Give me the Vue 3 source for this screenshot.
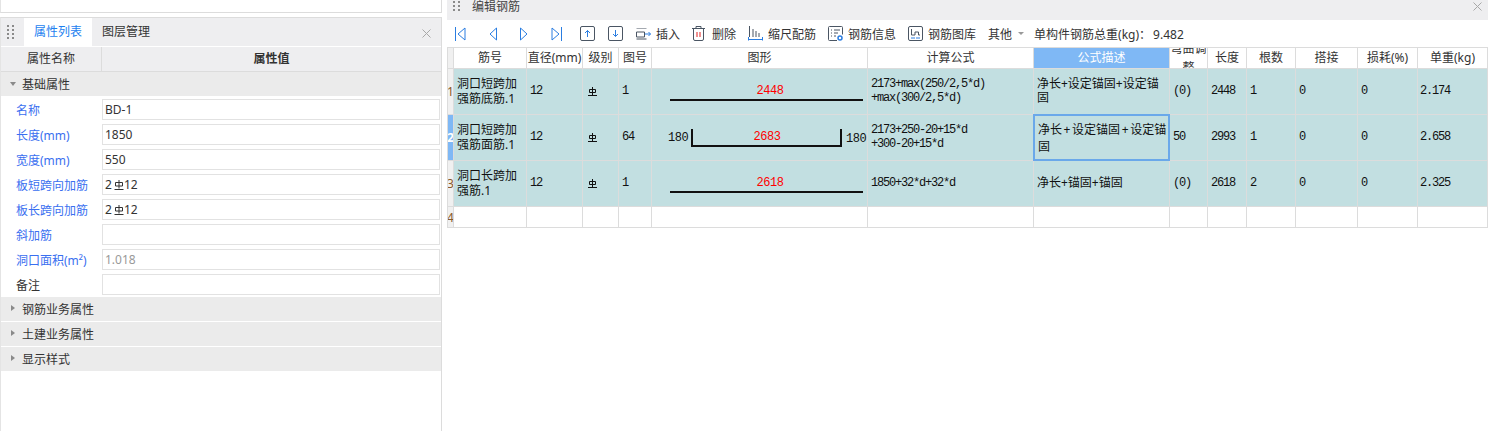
<template>
  <div class="page">
    <div class="left">
      <div class="top-strip"></div>
      <div class="panel">
        <div class="panel-head">
          <svg class="dots" width="7" height="15" viewBox="0 0 7 15"><g fill="#8a8a8a"><rect v-for="d in dots" :key="d.k" :x="d.x" :y="d.y" width="2" height="2" /></g></svg>
          <div class="tab active">属性列表</div>
          <div class="tab">图层管理</div>
          <svg class="close" width="9" height="9" viewBox="0 0 9 9"><path d="M0.5 0.5l8 8M8.5 0.5l-8 8" stroke="#a8a8a8" fill="none" /></svg>
        </div>
        <div class="prop-head">
          <div class="prop-name">属性名称</div>
          <div class="prop-val">属性值</div>
        </div>
        <div class="group">
          <span class="tri-down"></span>基础属性
        </div>
        <div v-for="p in props" :key="p.label" class="prop-row">
          <div class="label" :class="{ plain: p.plain }">{{ p.label }}</div>
          <div class="input" :class="{ muted: p.muted }">
            <template v-if="p.rebar">2<svg class="rebar" width="10" height="10" viewBox="0 0 10 10"><path d="M1.5 2.5h7v3.5h-7zM5 0v8.5M0.5 9.5h9" stroke="#333" fill="none" /></svg>12</template>
            <template v-else>{{ p.value }}</template>
          </div>
        </div>
        <div v-for="g in groups" :key="g" class="group closed">
          <span class="tri-right"></span>{{ g }}
        </div>
      </div>
    </div>

    <div class="right">
      <div class="title-bar">
        <svg class="dots2" width="7" height="12" viewBox="0 0 7 12"><g fill="#8a8a8a"><rect v-for="d in dots" :key="d.k" :x="d.x" :y="d.y - 3" width="2" height="2" /></g></svg>
        <span class="title">编辑钢筋</span>
        <svg class="close2" width="9" height="9" viewBox="0 0 9 9"><path d="M0.5 0.5l8 8M8.5 0.5l-8 8" stroke="#a8a8a8" fill="none" /></svg>
      </div>

      <div class="toolbar">
        <svg class="t-first" width="11" height="14" viewBox="0 0 11 14"><path d="M0.500 0v14M10 1L3 7l7 6z" stroke="#2a7de1" fill="none" /></svg>
        <svg class="t-prev" width="8" height="14" viewBox="0 0 8 14"><path d="M7.500 1L1 7l6.500 6z" stroke="#2a7de1" fill="none" /></svg>
        <svg class="t-next" width="8" height="14" viewBox="0 0 8 14"><path d="M0.500 1L7 7l-6.500 6z" stroke="#2a7de1" fill="none" /></svg>
        <svg class="t-last" width="11" height="14" viewBox="0 0 11 14"><path d="M10.500 0v14M1 1l7 6-7 6z" stroke="#2a7de1" fill="none" /></svg>
        <svg class="t-up" width="15" height="15" viewBox="0 0 15 15"><rect x="0.500" y="0.500" width="14" height="14" rx="1.500" stroke="#4a5563" fill="none" /><path d="M7.500 11V4.500M5 7l2.500-2.500L10 7" stroke="#2a7de1" fill="none" /></svg>
        <svg class="t-down" width="15" height="15" viewBox="0 0 15 15"><rect x="0.500" y="0.500" width="14" height="14" rx="1.500" stroke="#4a5563" fill="none" /><path d="M7.500 4v6.500M5 8l2.500 2.500L10 8" stroke="#2a7de1" fill="none" /></svg>
        <svg class="t-insert" width="15" height="12" viewBox="0 0 15 12"><path d="M0.500 0.500h10M0.500 4.500h8v5h-8zM0.500 11.500h10" stroke="#4a5563" fill="none" transform="translate(0 -0.500)" /><path d="M9 6h5.500M12.500 4l2 2-2 2" stroke="#2a7de1" fill="none" /></svg>
        <span class="t-text">插入</span>
        <svg class="t-trash" width="13" height="15" viewBox="0 0 13 15"><path d="M0 2.500h13M4 2.500V0.500h5v2M1.500 2.500v10.500a1.500 1.500 0 0 0 1.500 1.500h7a1.500 1.500 0 0 0 1.500-1.500V2.500" stroke="#4a5563" fill="none" /><path d="M5 6v5M8 6v5" stroke="#e02020" fill="none" /></svg>
        <span class="t-text wide">删除</span>
        <svg class="t-scale" width="15" height="15" viewBox="0 0 15 15"><path d="M1.500 0v11M5 3v8M8 5v6M11 7v4" stroke="#4a5563" fill="none" /><path d="M0.500 11v3.500M14.500 11v3.500M0 13.500h15" stroke="#2a7de1" fill="none" /></svg>
        <span class="t-text">缩尺配筋</span>
        <svg class="t-info" width="15" height="15" viewBox="0 0 15 15"><path d="M9 14.500H1.500a1 1 0 0 1-1-1v-12a1 1 0 0 1 1-1h12a1 1 0 0 1 1 1v7" stroke="#4a5563" fill="none" /><path d="M3 4h1M6 4h6M3 7h1M6 7h4M3 10h1M6 10h2" stroke="#4a5563" fill="none" /><circle cx="12" cy="12" r="2" stroke="#2a7de1" stroke-width="1.500" fill="none" /></svg>
        <span class="t-text">钢筋信息</span>
        <svg class="t-lib" width="15" height="15" viewBox="0 0 15 15"><rect x="0.500" y="0.500" width="14" height="14" rx="1.500" stroke="#4a5563" fill="none" /><path d="M3.500 3v6h3.500V6h3.500v3h1.500" stroke="#4a5563" fill="none" /><path d="M3 12h4M8 12h4" stroke="#2a7de1" fill="none" /></svg>
        <span class="t-text">钢筋图库</span>
        <span class="t-other">其他</span>
        <span class="caret"></span>
        <span class="t-total">单构件钢筋总重(kg)：<span class="t-value">9.482</span></span>
      </div>

      <div class="grid">
        <div class="h corner"></div>
        <div v-for="c in columns" :key="c" class="h" :class="{ sel: c === '公式描述', wrap: c === '弯曲调整' }">{{ c }}</div>

        <template v-for="(r, i) in rows" :key="r.no">
          <div class="rowno" :class="{ current: i === 1 }">{{ r.no }}</div>
          <div class="c name">{{ r.name }}</div>
          <div class="c num">{{ r.dia }}</div>
          <div class="c symbol">
            <svg width="9" height="9" viewBox="0 0 9 9"><path d="M1.500 2.500h6v3h-6zM4.500 0v8M0 8.500h9" stroke="#111" fill="none" /></svg>
          </div>
          <div class="c num">{{ r.fig }}</div>
          <div class="c shape">
            <svg v-if="r.bent" width="215" height="45" viewBox="0 0 215 45">
              <text x="16" y="26" class="dim">180</text>
              <path d="M40 14v17h149V14" stroke="#111" stroke-width="2" fill="none" />
              <text x="115" y="25" class="len">{{ r.len }}</text>
              <text x="194" y="27" class="dim">180</text>
            </svg>
            <svg v-else width="215" height="45" viewBox="0 0 215 45">
              <text x="118" y="25" class="len">{{ r.len }}</text>
              <path d="M18 31h193" stroke="#111" stroke-width="2" fill="none" />
            </svg>
          </div>
          <div class="c formula">{{ r.formula }}</div>
          <div class="c desc" :class="{ editing: i === 1 }">{{ r.desc }}</div>
          <div class="c num bend">{{ r.bend }}</div>
          <div class="c num">{{ r.total }}</div>
          <div class="c num">{{ r.count }}</div>
          <div class="c num">0</div>
          <div class="c num">0</div>
          <div class="c num weight">{{ r.weight }}</div>
        </template>

        <div class="rowno empty-no">4</div>
        <div v-for="c in columns" :key="'e' + c" class="blank"></div>
      </div>
    </div>
  </div>
</template>

<script setup>
const dots = []
for (let i = 0; i < 4; i++) {
  dots.push({ k: 'a' + i, x: 0, y: 3 + i * 4 - 3 })
  dots.push({ k: 'b' + i, x: 5, y: 3 + i * 4 - 3 })
}

const props = [
  { label: '名称', value: 'BD-1' },
  { label: '长度(mm)', value: '1850' },
  { label: '宽度(mm)', value: '550' },
  { label: '板短跨向加筋', rebar: true },
  { label: '板长跨向加筋', rebar: true },
  { label: '斜加筋', value: '' },
  { label: '洞口面积(m²)', value: '1.018', muted: true },
  { label: '备注', value: '', plain: true }
]

const groups = ['钢筋业务属性', '土建业务属性', '显示样式']

const columns = ['筋号', '直径(mm)', '级别', '图号', '图形', '计算公式', '公式描述', '弯曲调整', '长度', '根数', '搭接', '损耗(%)', '单重(kg)']

const rows = [
  {
    no: 1,
    name: '洞口短跨加\n强筋底筋.1',
    dia: 12,
    fig: 1,
    len: 2448,
    formula: '2173+max(250/2,5*d)\n+max(300/2,5*d)',
    desc: '净长+设定锚固+设定锚\n固',
    bend: '(0)',
    total: 2448,
    count: 1,
    weight: '2.174'
  },
  {
    no: 2,
    name: '洞口短跨加\n强筋面筋.1',
    dia: 12,
    fig: 64,
    len: 2683,
    bent: true,
    formula: '2173+250-20+15*d\n+300-20+15*d',
    desc: '净长 + 设定锚固 + 设定锚\n固',
    bend: '50',
    total: 2993,
    count: 1,
    weight: '2.658'
  },
  {
    no: 3,
    name: '洞口长跨加\n强筋.1',
    dia: 12,
    fig: 1,
    len: 2618,
    formula: '1850+32*d+32*d',
    desc: '净长+锚固+锚固',
    bend: '(0)',
    total: 2618,
    count: 2,
    weight: '2.325'
  }
]
</script>

<style>
html,
body {
  margin: 0;
  background: #fff;
}
</style>

<style scoped>
.page {
  width: 1488px;
  height: 431px;
  display: flex;
  overflow: hidden;
  background: #fff;
  color: #333;
  font-family: "Noto Sans", "Noto Sans CJK SC", sans-serif;
  font-size: 12px;
}
.left {
  width: 442px;
  flex: none;
  height: 431px;
}
.top-strip {
  height: 12px;
  border-bottom: 1px solid #dcdcdc;
  border-left: 1px solid #e4e4e4;
  border-right: 1px solid #dcdcdc;
  margin-bottom: 4px;
}
.panel {
  height: 414px;
  border-top: 1px solid #dcdcdc;
  border-left: 1px solid #e4e4e4;
  border-right: 1px solid #dcdcdc;
}
.panel-head {
  height: 28px;
  background: #eeeef0;
  display: flex;
  align-items: stretch;
  position: relative;
  padding-left: 23px;
}
.dots {
  position: absolute;
  left: 6px;
  top: 7px;
}
.tab {
  width: 68px;
  line-height: 28px;
  text-align: center;
  color: #333;
}
.tab.active {
  background: #fff;
  color: #1d7ff0;
}
.panel-head .close {
  position: absolute;
  right: 10px;
  top: 11px;
}
.prop-head {
  height: 24px;
  margin-top: 1px;
  display: flex;
  background: #eeeef0;
  border-bottom: 1px solid #dcdcdc;
  line-height: 23px;
  text-align: center;
}
.prop-name {
  width: 100px;
  border-right: 1px solid #dcdcdc;
}
.prop-val {
  flex: 1;
  font-weight: 700;
}
.group {
  height: 24px;
  margin-bottom: 1px;
  background: #ebebeb;
  display: flex;
  align-items: center;
  padding-left: 21px;
  position: relative;
}
.tri-down {
  position: absolute;
  left: 9px;
  top: 10px;
  border-left: 3px solid transparent;
  border-right: 3px solid transparent;
  border-top: 4px solid #8a8a8a;
}
.tri-right {
  position: absolute;
  left: 10px;
  top: 8px;
  border-top: 3px solid transparent;
  border-bottom: 3px solid transparent;
  border-left: 4px solid #8a8a8a;
}
.prop-row {
  height: 25px;
  display: flex;
  align-items: center;
}
.label {
  width: 101px;
  padding-left: 15px;
  box-sizing: border-box;
  flex: none;
  color: #3a6ff0;
}
.label.plain {
  color: #333;
}
.input {
  width: 338px;
  height: 21px;
  box-sizing: border-box;
  border: 1px solid #e2e2e2;
  padding-left: 2px;
  line-height: 19px;
  white-space: nowrap;
  color: #333;
}
.input.muted {
  color: #999;
}
.rebar {
  margin: 0 0 1px 2px;
  vertical-align: middle;
}
.right {
  flex: none;
  width: 1041px;
  margin-left: 5px;
}
.title-bar {
  height: 20px;
  background: #eeeef0;
  position: relative;
  padding-left: 25px;
  line-height: 14px;
}
.dots2 {
  position: absolute;
  left: 6px;
  top: 0;
}
.title {
  color: #444;
}
.close2 {
  position: absolute;
  right: 6px;
  top: 2px;
}
.toolbar {
  height: 28px;
  box-sizing: border-box;
  border-bottom: 1px solid #dcdcdc;
  display: flex;
  align-items: center;
  padding-left: 8px;
  white-space: nowrap;
}
.t-prev { margin-left: 23px; }
.t-next { margin-left: 23px; }
.t-last { margin-left: 23px; }
.t-up { margin-left: 18px; }
.t-down { margin-left: 13px; }
.t-insert { margin-left: 13px; }
.t-trash { margin-left: 12px; }
.t-scale { margin-left: 12px; }
.t-info { margin-left: 12px; }
.t-lib { margin-left: 12px; }
.t-text { margin-left: 5px; }
.t-text.wide { margin-left: 7px; }
.t-other { margin-left: 12px; }
.caret {
  margin-left: 6px;
  border-left: 3px solid transparent;
  border-right: 3px solid transparent;
  border-top: 3px solid #999;
}
.t-total { margin-left: 10px; }
.t-value { margin-left: 2px; }
.grid {
  display: grid;
  grid-template-columns: 7px 73px 56px 36px 33px 216px 166px 136px 38px 39px 49px 62px 60px 70px;
  grid-template-rows: 21px 46px 46px 46px 21px;
}
.h {
  box-sizing: border-box;
  border-right: 1px solid #dcdcdc;
  border-bottom: 1px solid #dcdcdc;
  text-align: center;
  line-height: 20px;
  height: 21px;
  overflow: hidden;
  white-space: nowrap;
}
.h.corner {
  background: #f0f0f0;
  border-left: 1px solid #dcdcdc;
}
.h.sel {
  background: #7fb8f5;
  color: #fff;
}
.h.wrap {
  white-space: normal;
  line-height: 19px;
  display: flex;
  align-items: center;
  justify-content: center;
}
.rowno {
  box-sizing: border-box;
  background: #f0f0f0;
  border-left: 1px solid #dcdcdc;
  border-right: 1px solid #dcdcdc;
  border-bottom: 1px solid #dcdcdc;
  overflow: hidden;
  display: flex;
  align-items: center;
  justify-content: center;
  color: #8a5a2a;
  font-size: 12px;
}
.rowno.current {
  background: #7fb8f5;
  color: #fff;
  font-weight: 700;
}
.c {
  box-sizing: border-box;
  background: #c2dfe1;
  border-right: 1px solid #dcdcdc;
  border-bottom: 1px solid #dcdcdc;
  padding-left: 3px;
  display: flex;
  align-items: center;
  color: #111;
  overflow: hidden;
  white-space: pre-line;
}
.name {
  line-height: 15px;
  padding-bottom: 1px;
}
.num,
.formula {
  font-family: "Liberation Mono", "Noto Sans CJK SC", monospace;
  letter-spacing: -1.2px;
  padding-bottom: 1px;
}
.formula {
  line-height: 14px;
}
.symbol {
  padding-left: 5px;
}
.shape {
  padding-left: 0;
}
.dim,
.len {
  font-family: "Liberation Mono", monospace;
  font-size: 12px;
  letter-spacing: -0.5px;
  text-anchor: middle;
}
.dim {
  fill: #111;
  text-anchor: start;
}
.len {
  fill: #f00;
}
.desc {
  line-height: 14px;
  padding-bottom: 2px;
}
.desc.editing {
  border: 2px solid #6aa8ea;
  margin: -1px 0 0 -1px;
  width: 137px;
  height: 47px;
  padding-left: 3px;
  padding-bottom: 0;
  line-height: 17px;
  word-spacing: -1.5px;
  position: relative;
}
.bend {
  padding-left: 3px;
}
.weight {
  padding-left: 2px;
}
.blank {
  box-sizing: border-box;
  border-right: 1px solid #dcdcdc;
  border-bottom: 1px solid #dcdcdc;
}
</style>
